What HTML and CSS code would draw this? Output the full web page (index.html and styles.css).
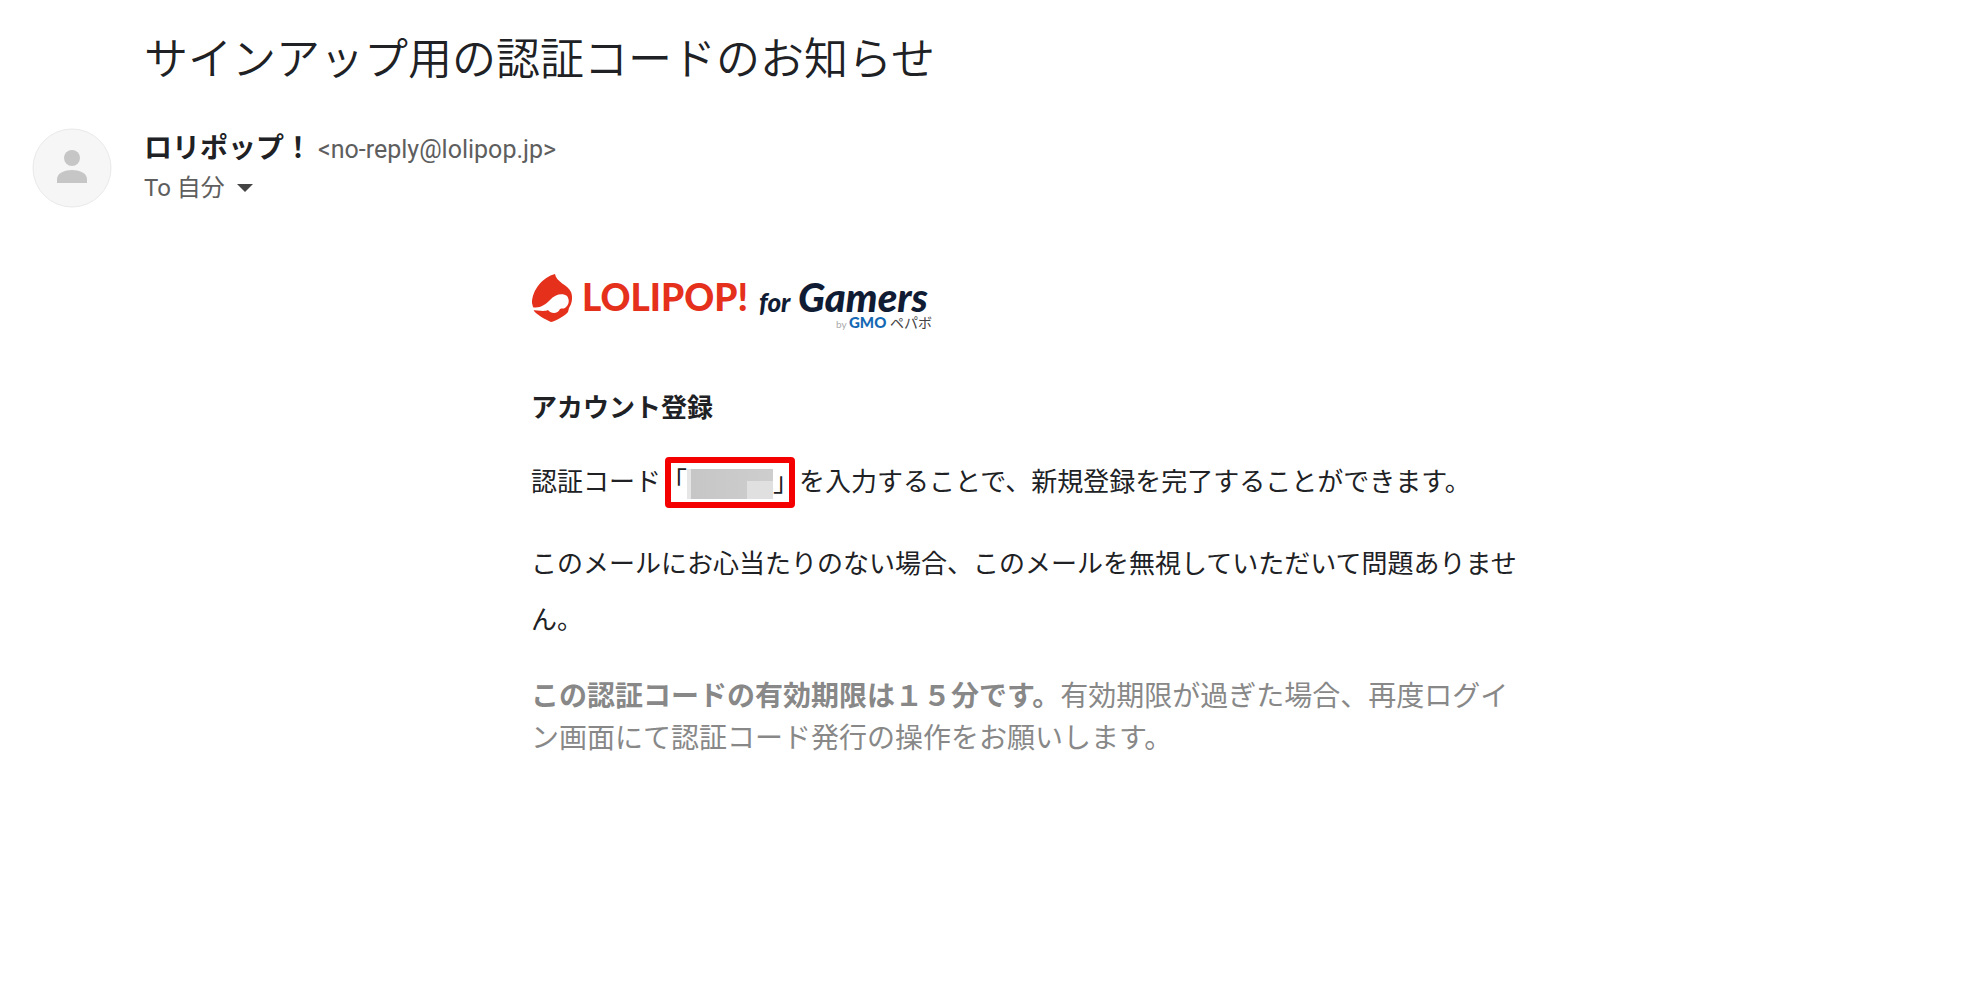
FILE: index.html
```html
<!DOCTYPE html>
<html lang="ja">
<head>
  <meta charset="UTF-8" />
  <meta name="viewport" content="width=device-width, initial-scale=1" />
  <title>サインアップ用の認証コードのお知らせ</title>
  <link rel="stylesheet" href="styles.css">
</head>
<body>
  <main class="mail">
    <h1 class="subject">サインアップ用の認証コードのお知らせ</h1>

    <header class="sender">
      <svg class="avatar" viewBox="0 0 80 80" aria-hidden="true">
        <circle cx="40" cy="40" r="39" fill="#f6f6f6" stroke="#e9e9e9" stroke-width="1" />
        <circle cx="40" cy="30" r="8" fill="#c6c6c6" />
        <path d="M25 55v-4c0-6 8-9 15-9s15 3 15 9v4z" fill="#c6c6c6" />
      </svg>
      <div class="sender-info">
        <div class="from">
          <span class="name">ロリポップ！</span>
          <span class="address">&lt;no-reply@lolipop.jp&gt;</span>
        </div>
        <button class="to" type="button">
          To 自分
          <svg class="arrow" viewBox="0 0 16 8" aria-hidden="true"><path d="M0 0h16l-8 8z" /></svg>
        </button>
      </div>
    </header>

    <div class="body">
      <article class="content">
        <svg class="logo" viewBox="0 0 404 60" role="img" aria-label="LOLIPOP! for Gamers by GMOペパボ">
          <path class="red" d="M24 2C12 5 1 18 1 31L3 39C5 42 15 48 20 50C25 49 35 43 37 40L38 36C41 32 42 25 40 20C37 13 25 10 24 2Z" />
          <path fill="#fff" d="M1 35C8 37 14 33 19 28C24 22 32 21 36 24C39 28 38 33 34 36C32 37 31 36 29 37C27 42 20 42 17 38C13 40 6 38 1 38Z" />
          <text class="red brand" x="51" y="39">LOLIPOP!</text>
          <text class="navy for" x="228" y="40">for</text>
          <text class="navy gamers" x="267" y="40">Gamers</text>
          <text class="by" x="305" y="56">by</text>
          <text class="gmo" x="318" y="56">GMO</text>
          <text class="pepabo" x="359" y="56">ペパボ</text>
        </svg>

        <h2 class="heading">アカウント登録</h2>
        <p class="text">認証コード<span class="code">「<span class="mask"></span>」</span>を入力することで、新規登録を完了することができます。</p>
        <p class="text">このメールにお心当たりのない場合、このメールを無視していただいて問題ありません。</p>
        <p class="note"><strong>この認証コードの有効期限は１５分です。</strong>有効期限が過ぎた場合、再度ログイン画面にて認証コード発行の操作をお願いします。</p>
      </article>
    </div>
  </main>
</body>
</html>
```
FILE: styles.css
```css
* {
  box-sizing: border-box;
}
body {
  margin: 0;
  background: #fff;
  color: #202124;
  font-family: "Noto Sans CJK JP", sans-serif;
}
.mail {
  padding: 28px 72px 32px 32px;
}
.subject {
  margin: 0 0 44px 112px;
  font-size: 44px;
  font-weight: 350;
  line-height: 56px;
}
.sender {
  display: flex;
  gap: 32px;
  height: 80px;
}
.avatar {
  flex: none;
  width: 80px;
  height: 80px;
}
.from {
  display: flex;
  align-items: baseline;
  gap: 6px;
  line-height: 36px;
}
.name {
  font-size: 28px;
  font-weight: bold;
}
.address {
  color: #5e5e5e;
  font-family: Roboto, sans-serif;
  font-size: 25px;
}
.to {
  display: flex;
  align-items: center;
  gap: 12px;
  padding: 0;
  border: 0;
  background: none;
  color: #5e5e5e;
  font-family: Roboto, "Noto Sans CJK JP", sans-serif;
  font-size: 24px;
  line-height: 40px;
}
.arrow {
  width: 16px;
  height: 8px;
  fill: #444;
}
.body {
  padding-left: 112px;
}
.content {
  max-width: 990px;
  margin: 64px auto 0;
}
.logo {
  display: block;
  width: 404px;
  height: 60px;
  font-family: Lato, sans-serif;
  font-weight: 900;
}
.red {
  fill: #e5301c;
}
.navy {
  fill: #101c34;
  font-style: italic;
}
.brand {
  font-size: 37px;
}
.for {
  font-size: 26px;
}
.gamers {
  font-size: 40px;
}
.by {
  fill: #aaa;
  font-size: 10px;
  font-weight: 400;
}
.gmo {
  fill: #1468b4;
  font-size: 15px;
}
.pepabo {
  fill: #444;
  font-family: "Noto Sans CJK JP", sans-serif;
  font-size: 14px;
  font-weight: 400;
}
.heading {
  margin: 54px 0 0;
  font-size: 26px;
  line-height: 40px;
}
.text {
  margin: 26px 0;
  font-size: 26px;
  line-height: 56px;
}
.code {
  position: relative;
}
/* red frame around the code */
.code::after {
  content: "";
  position: absolute;
  inset: -4px 4px -10px;
  border: 6px solid #f50000;
  border-radius: 4px;
}
.mask {
  display: inline-block;
  width: 86px;
  height: 30px;
  vertical-align: middle;
  background:
    linear-gradient(#e0e0e0, #e0e0e0) right bottom / 26px 18px no-repeat,
    linear-gradient(90deg, #e6e6e6 4px, #c6c6c6 4px, #cecece);
}
.note {
  margin: 27px 0 0;
  color: #888;
  font-size: 28px;
  line-height: 42px;
}
```
